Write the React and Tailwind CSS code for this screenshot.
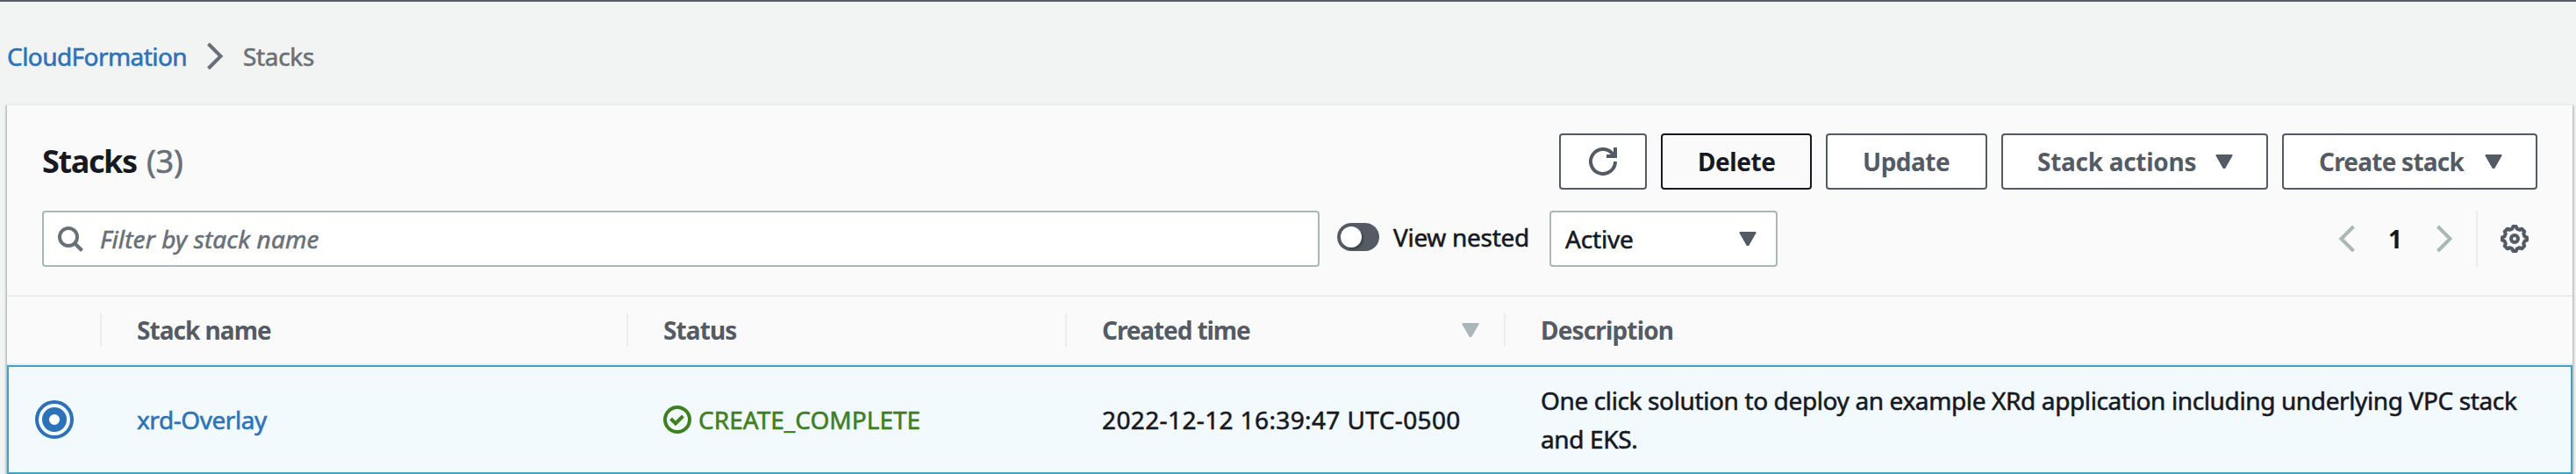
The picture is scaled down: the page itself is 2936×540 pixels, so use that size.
import React from "react";

const TEXT = "[-webkit-text-stroke:0.55px]";

function Caret({ className }) {
  return (
    <svg viewBox="0 0 20 16" className={`h-4 w-5 shrink-0 ${className}`} fill="currentColor" stroke="currentColor" strokeWidth="2" strokeLinejoin="round">
      <path d="M1.4 1h17.2L10.6 15h-1.2z" />
    </svg>
  );
}

function Button({ className, children }) {
  return (
    <button className={`flex h-16 shrink-0 items-center rounded-[4px] border-2 font-bold ${className}`}>
      {children}
    </button>
  );
}

function RefreshIcon() {
  return (
    <svg viewBox="0 0 32 32" className="size-8 shrink-0 text-[#545b64]" fill="none" stroke="currentColor" strokeWidth="4">
      <path d="M30 16a14 14 0 1 1-3.6-9.4L29.5 10" />
      <path d="M30 0v10H20" />
    </svg>
  );
}

function SearchIcon() {
  return (
    <svg viewBox="0 0 32 32" className="size-8 shrink-0 text-[#687078]" fill="none" stroke="currentColor" strokeWidth="4">
      <circle cx="14" cy="14" r="10" />
      <path d="M21 21l8.500 8.500" />
    </svg>
  );
}

function Chevron({ flip, className }) {
  return (
    <svg viewBox="0 0 20 32" className={`h-8 w-5 shrink-0 ${className}`} fill="none" stroke="currentColor" strokeWidth="4">
      <path d={flip ? "M17.5 2L3.5 16l14 14" : "M2.5 2l14 14-14 14"} />
    </svg>
  );
}

function GearIcon() {
  return (
    <svg viewBox="0 0 32 32" className="size-8 shrink-0 text-[#545b64]" fill="none" stroke="currentColor" strokeWidth="4" strokeLinejoin="round">
      <path d="M14.300 2h3.400l1 2.600 3 1.200 2.500-1.100 3.100 3.100-1.100 2.500 1.200 3 2.600 1v3.400l-2.600 1-1.200 3 1.100 2.500-3.100 3.100-2.500-1.100-3 1.200-1 2.600h-3.400l-1-2.600-3-1.200-2.500 1.100-3.100-3.100 1.100-2.500-1.200-3-2.600-1v-3.400l2.600-1 1.200-3-1.100-2.500 3.100-3.100 2.500 1.100 3-1.200z" />
      <circle cx="16" cy="16" r="4" />
    </svg>
  );
}

function CheckIcon() {
  return (
    <svg viewBox="0 0 32 32" className="size-8 shrink-0" fill="none" stroke="currentColor" strokeWidth="4">
      <circle cx="16" cy="16" r="14" />
      <path d="M8.500 15l5.500 5.500L22.500 12" />
    </svg>
  );
}

function HeadCell({ className, children }) {
  return (
    <div className={`flex h-[38px] items-center border-l-2 border-[#eaeded] pl-10 font-bold ${className}`}>
      {children}
    </div>
  );
}

export default function App() {
  return (
    <div className="flex h-[540px] w-[2936px] flex-col overflow-hidden border-t-2 border-[#545b64] bg-[#f2f3f3] font-['Noto_Sans','Open_Sans',sans-serif] text-[28px] leading-[44px] whitespace-nowrap text-[#16191f]">
      <nav className={`flex h-[116px] shrink-0 items-center pt-2 pl-2 ${TEXT}`}>
        <a className="w-[227px] shrink-0 tracking-[-0.56px] text-[#2d72b8]">CloudFormation</a>
        <Chevron className="text-[#687078]" />
        <span className="ml-[22px] tracking-[-0.32px] text-[#687078]">Stacks</span>
      </nav>

      <main className="mx-[8px] mr-1 flex h-[422px] shrink-0 flex-col border-t-2 border-[#eaeded] bg-[#fafafa] shadow-[0_2px_2px_0_rgba(0,28,36,0.3),2px_2px_2px_0_rgba(0,28,36,0.15),-2px_2px_2px_0_rgba(0,28,36,0.15)]">
        <header className="flex h-[216px] shrink-0 flex-col pt-8 pr-10 pl-10">
          <div className="flex h-16 items-center justify-between">
            <h1 className="flex text-[36px] text-[#16191f]">
              <span className="w-[119px] font-bold tracking-[-1.38px]">Stacks</span>
              <span className={`tracking-[-0.2px] text-[#687078] ${TEXT}`}>(3)</span>
            </h1>
            <div className="flex gap-4 text-[#545b64]">
              <Button className="w-[100px] justify-center border-[#545b64] bg-white"><RefreshIcon /></Button>
              <Button className="w-[172px] border-[#16191f] pl-10 tracking-[-0.42px] text-[#16191f]">Delete</Button>
              <Button className="w-[184px] border-[#545b64] bg-white pl-10 tracking-[-0.5px]">Update</Button>
              <Button className="w-[304px] border-[#545b64] bg-white pl-[39px] tracking-[-0.29px]">Stack actions<Caret className="ml-[22px]" /></Button>
              <Button className="w-[291px] border-[#545b64] bg-white pl-[40px] tracking-[-0.78px]">Create stack<Caret className="ml-[24px]" /></Button>
            </div>
          </div>

          <div className="mt-6 flex h-16 items-center">
            <div className="flex h-16 w-[1456px] items-center rounded-[4px] border-2 border-[#aab7b8] bg-white pl-3.5">
              <SearchIcon />
              <span className={`ml-[18px] tracking-[0.12px] text-[#687078] italic ${TEXT}`}>Filter by stack name</span>
            </div>
            <div className="mb-1 ml-5 flex h-8 w-12 items-center rounded-full bg-[#545b64] pl-1">
              <div className="size-6 rounded-full bg-white shadow-[2px_2px_2px_0_rgba(0,0,0,0.3)]" />
            </div>
            <span className={`ml-4 w-[178px] pb-1 tracking-[-0.3px] ${TEXT}`}>View nested</span>
            <div className="flex h-16 w-[260px] items-center justify-between rounded-[4px] border-2 border-[#aab7b8] bg-white pr-[22px] pl-4">
              <span className={`tracking-[-0.18px] ${TEXT}`}>Active</span>
              <Caret className="text-[#545b64]" />
            </div>
            <div className="ml-auto flex h-16 items-center">
              <Chevron flip className="text-[#aab7b8]" />
              <span className="ml-[37px] w-[54px] font-bold">1</span>
              <Chevron className="text-[#aab7b8]" />
              <div className="ml-[26px] h-16 w-[28px] border-l-2 border-[#eaeded]" />
              <GearIcon />
              <div className="w-[10px]" />
            </div>
          </div>
        </header>

        <div className="flex h-20 shrink-0 items-center border-y-2 border-[#eaeded] text-[#545b64]">
          <div className="w-[106px]" />
          <HeadCell className="w-[600px] tracking-[-0.97px]">Stack name</HeadCell>
          <HeadCell className="w-[500px] tracking-[-0.88px]">Status</HeadCell>
          <HeadCell className="w-[500px] justify-between pr-7 tracking-[-1.1px]">
            Created time
            <Caret className="text-[#aab7b8]" />
          </HeadCell>
          <HeadCell className="grow tracking-[-0.85px]">Description</HeadCell>
        </div>

        <div className={`flex h-[124px] shrink-0 items-center border-2 border-[#45a0c6] bg-[#f2fafd] ${TEXT}`}>
          <div className="w-[146px] shrink-0 pl-[30px]">
            <svg viewBox="0 0 44 44" className="size-11" fill="none" stroke="#2d72b8">
              <circle cx="22" cy="22" r="20" strokeWidth="4" />
              <circle cx="22" cy="22" r="10" fill="#fff" strokeWidth="8" />
            </svg>
          </div>
          <a className="w-[600px] shrink-0 tracking-[-0.44px] text-[#2d72b8]">xrd-Overlay</a>
          <div className="flex w-[500px] shrink-0 items-center text-[#3f7f1e]">
            <CheckIcon />
            <span className="ml-2 tracking-[0.02px]">CREATE_COMPLETE</span>
          </div>
          <div className="w-[500px] shrink-0 tracking-[0.38px]">2022-12-12 16:39:47 UTC-0500</div>
          <p className="tracking-[-0.375px]">
            One click solution to deploy an example XRd application including underlying VPC stack
            <br />
            and EKS.
          </p>
        </div>
      </main>
    </div>
  );
}
